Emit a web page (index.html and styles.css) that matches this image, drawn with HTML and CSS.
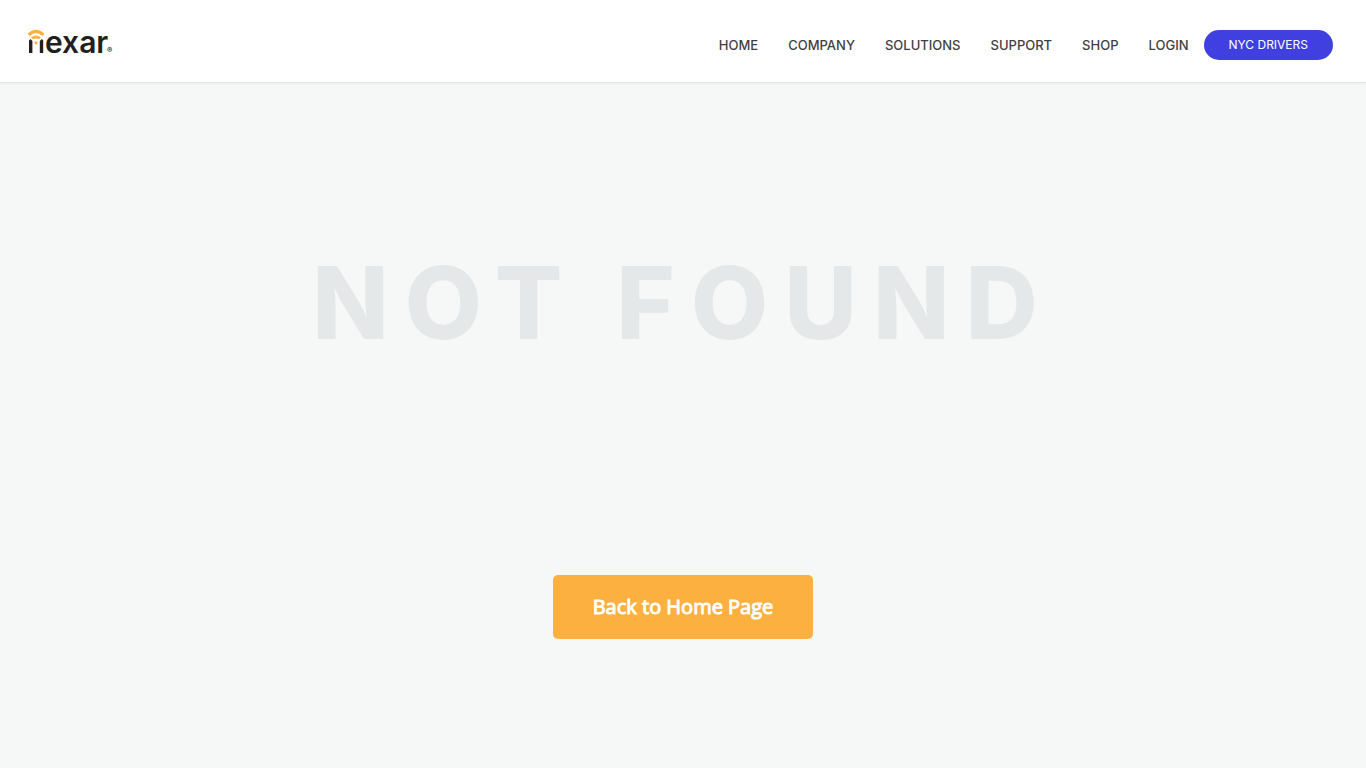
FILE: index.html
```
<!DOCTYPE html>
<html lang="en">
<head>
    <meta charset="UTF-8">
    <meta name="viewport" content="width=device-width, initial-scale=1">
    <title>Not Found</title>
    <link rel="stylesheet" href="styles.css">
</head>
<body>
    <header class="header">
        <a class="logo" href="#" aria-label="nexar">
            <svg width="92" height="38" viewBox="0 0 92 38">
                <!-- signal -->
                <path d="M1.6 8.8 Q9 1.8 16.4 8.8" fill="none" stroke="#fcb040" stroke-width="3"/>
                <path d="M4.2 11.4 Q9 7.4 13.8 11.4 L12 13.2 Q9 11.8 6 13.2Z" fill="#fcb040"/>
                <circle cx="9" cy="16.8" r="1.6" fill="#fcb040"/>
                <!-- posts -->
                <path d="M2 27V14.5L3.4 13L5.4 15V27ZM12.8 27V15L14.8 13L16.2 14.5V27Z" fill="#231f20"/>
                <text class="logo-text" x="18" y="27">exar</text>
                <text class="logo-mark" x="80" y="27">®</text>
            </svg>
        </a>
        <nav class="nav">
            <a class="nav-link" href="#">HOME</a>
            <a class="nav-link" href="#">COMPANY</a>
            <a class="nav-link" href="#">SOLUTIONS</a>
            <a class="nav-link" href="#">SUPPORT</a>
            <a class="nav-link" href="#">SHOP</a>
            <a class="nav-link" href="#">LOGIN</a>
            <a class="nav-button" href="#">NYC DRIVERS</a>
        </nav>
    </header>
    <main class="content">
        <h1 class="title">NOT FOUND</h1>
        <a class="home-button" href="#">Back to Home Page</a>
    </main>
</body>
</html>
```
FILE: styles.css
```
* {
    box-sizing: border-box;
}
body {
    margin: 0;
    min-height: 100vh;
    background: #f5f8f7;
    font-family: Inter, sans-serif;
}
a {
    text-decoration: none;
}
.header {
    display: flex;
    justify-content: space-between;
    align-items: center;
    padding: 26px 33px 18px 27px;
    background: #fff;
    border-bottom: 1px solid #e1e4e4;
    box-shadow: 0 1px 2px rgba(0, 0, 0, 0.04);
}
.logo {
    display: flex;
}
.logo svg {
    overflow: visible;
}
.logo-text {
    font: 600 30px Inter, sans-serif;
    fill: #231f20;
}
.logo-mark {
    font: 700 8px Inter, sans-serif;
    fill: #231f20;
}
.nav {
    display: flex;
    align-items: center;
    padding: 4px 0;
}
.nav-link {
    padding: 0 15px;
    font-size: 13px;
    font-weight: 500;
    line-height: 30px;
    color: #3f3f3f;
}
.nav-button {
    padding: 0 25px;
    border-radius: 15px;
    background: #4040e0;
    color: #fff;
    font-size: 12px;
    line-height: 30px;
}
.content {
    display: flex;
    flex-direction: column;
    align-items: center;
}
.title {
    margin: 144px 0 196px;
    font-size: 100px;
    font-weight: 800;
    line-height: 152px;
    letter-spacing: 16px;
    text-align: center;
    color: #e4e8e8;
}
.home-button {
    padding: 0 40px;
    border-radius: 5px;
    background: #fcb040;
    color: #fff;
    font-family: "Open Sans", sans-serif;
    font-size: 20px;
    line-height: 64px;
    -webkit-text-stroke: 1px #fff;
}
```
